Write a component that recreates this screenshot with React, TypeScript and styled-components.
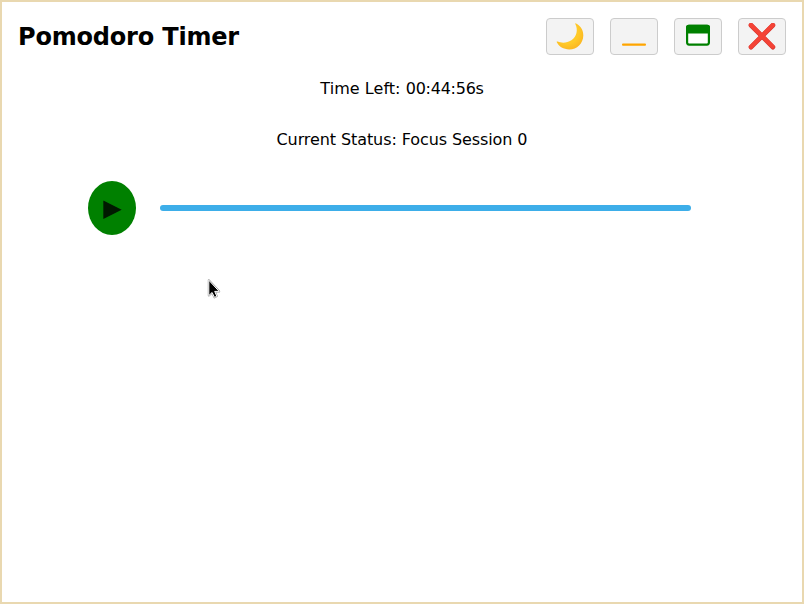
import React from "react";
import styled, { createGlobalStyle } from "styled-components";

const GlobalStyle = createGlobalStyle`
  *, *::before, *::after { box-sizing: border-box; }
  body {
    margin: 0;
    background: #fff;
    color: #000;
    font-family: "DejaVu Sans", sans-serif;
    font-size: 16px;
  }
`;

const Window = styled.main`
  position: relative;
  height: 100vh;
  border: 2px solid #e9d8b0;
  overflow: hidden;
`;

const TitleBar = styled.header`
  display: flex;
  align-items: center;
  justify-content: space-between;
  padding: 16px 16px 0;
  height: 53px;
`;

const Title = styled.h1`
  margin: 0;
  font-size: 24px;
  line-height: 28px;
  font-weight: 700;
  letter-spacing: -0.19px;
`;

const Controls = styled.div`
  display: flex;
  gap: 16px;
`;

const ControlButton = styled.button`
  display: flex;
  align-items: center;
  justify-content: center;
  width: 48px;
  height: 37px;
  padding: 0;
  border: 1px solid #ccc;
  border-radius: 4px;
  background: #f3f3f3;

  svg {
    display: block;
    flex: none;
  }
`;

const Status = styled.section`
  display: flex;
  flex-direction: column;
  align-items: center;
  gap: 32px;
  padding-top: 24px;
`;

const StatusLine = styled.p<{ $tracking: number }>`
  margin: 0;
  line-height: 19px;
  letter-spacing: ${({ $tracking }) => $tracking}px;
`;

const Clock = styled.span`
  letter-spacing: -0.25px;
`;

const TimerRow = styled.div`
  display: flex;
  align-items: center;
  gap: 24px;
  margin: 32px 0 0 86px;
`;

const PlayButton = styled.button`
  display: flex;
  align-items: center;
  justify-content: center;
  width: 48px;
  height: 54px;
  padding: 0 0 0 1px;
  border: 0;
  border-radius: 50%;
  background: #008000;
  color: #001a00;
  font-family: "DejaVu Sans", sans-serif;
  font-size: 24px;
  line-height: 28px;
`;

const Progress = styled.div`
  width: 531.4px;
  height: 6px;
  border-radius: 3px;
  background: #3daee9;
`;

const Pointer = styled.svg`
  position: absolute;
  left: 205px;
  top: 276px;
`;

const MoonIcon = () => (
  <svg width="28" height="28" viewBox="0 0 28 28">
    <defs>
      <radialGradient id="moon" cx="0.4" cy="0.35" r="0.65">
        <stop offset="0.65" stopColor="#ffca28" />
        <stop offset="1" stopColor="#fbb822" />
      </radialGradient>
    </defs>
    <path
      d="M20.1 .5C24.8 3.1 27.4 7.4 27.3 12.4C27.1 20.4 21.1 26.4 13.3 26.4C7.4 26.4 3.1 23.6 .8 19.3C.4 18.5 1 18.2 1.8 18.6C5.4 20.3 11 20.3 15.4 17.3C20.9 13.5 22.1 6.6 19.4 1.2C19 .4 19.4 .1 20.1 .5Z"
      fill="url(#moon)"
    />
  </svg>
);

const MinimizeIcon = () => (
  <svg width="24" height="28" viewBox="0 0 24 28">
    <rect y="20.5" width="24" height="2.2" rx="1" fill="#ffa500" />
  </svg>
);

const MaximizeIcon = () => (
  <svg width="24" height="28" viewBox="0 0 24 28">
    <rect x="1.1" y="2.8" width="21.8" height="18.8" rx="2" fill="#fff" stroke="#008000" strokeWidth="2.2" />
    <path d="M0 10.6V4.5Q0 1.8 2.5 1.8H21.5Q24 1.8 24 4.5V10.6Z" fill="#008000" />
  </svg>
);

const CloseIcon = () => (
  <svg width="28" height="28" viewBox="0 0 28 28">
    <path d="M3 2.2L24.9 24.1M24.9 2.2L3 24.1" fill="none" stroke="#d6352f" strokeWidth="4.8" strokeLinecap="round" />
    <path d="M3 2L24.7 23.7M24.8 2L3 23.8" fill="none" stroke="#f44336" strokeWidth="4" strokeLinecap="round" />
  </svg>
);

export default function App() {
  return (
    <>
      <GlobalStyle />
      <Window>
        <TitleBar>
          <Title>Pomodoro Timer</Title>
          <Controls>
            <ControlButton aria-label="Dark mode"><MoonIcon /></ControlButton>
            <ControlButton aria-label="Minimize"><MinimizeIcon /></ControlButton>
            <ControlButton aria-label="Maximize"><MaximizeIcon /></ControlButton>
            <ControlButton aria-label="Close"><CloseIcon /></ControlButton>
          </Controls>
        </TitleBar>
        <Status>
          <StatusLine $tracking={0.05}>Time Left: <Clock>00:44:56s</Clock></StatusLine>
          <StatusLine $tracking={-0.09}>Current Status: Focus Session 0</StatusLine>
        </Status>
        <TimerRow>
          <PlayButton aria-label="Start">▶</PlayButton>
          <Progress />
        </TimerRow>
        <Pointer width="16" height="24" viewBox="0 0 16 24">
          <path
            d="M1.8 2.2V17.6L5.1 14.5L7.5 19.4L9.8 18.2L7.7 13.4H12.2Z"
            fill="#000"
            stroke="#999"
            strokeWidth="2"
            strokeLinejoin="round"
          />
          <path
            d="M1.8 2.2V17.6L5.1 14.5L7.5 19.4L9.8 18.2L7.7 13.4H12.2Z"
            fill="#000"
            stroke="#fff"
            strokeWidth="1"
            strokeLinejoin="round"
          />
        </Pointer>
      </Window>
    </>
  );
}
